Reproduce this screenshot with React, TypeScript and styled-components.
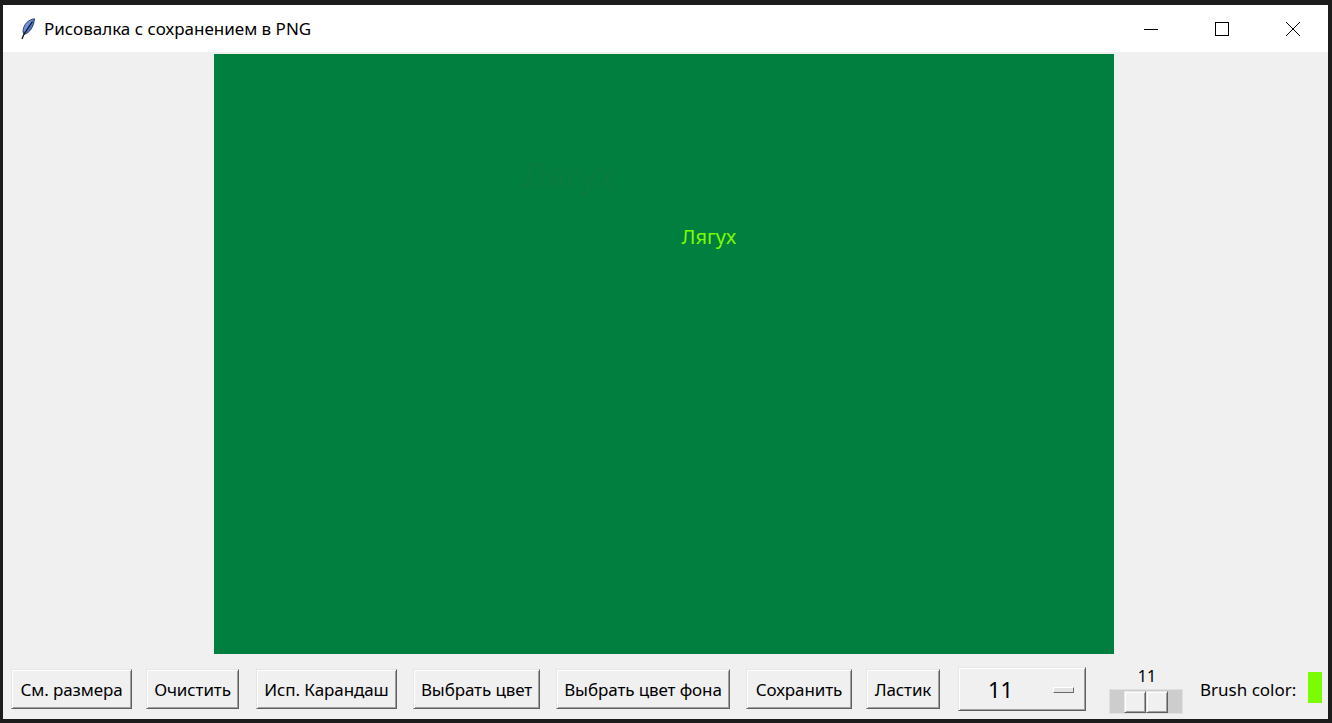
import React from 'react';
import styled, { createGlobalStyle } from 'styled-components';

const GlobalStyle = createGlobalStyle`
  html, body {
    margin: 0;
    padding: 0;
    background: #1c1c1c;
    overflow: hidden;
  }
  * {
    box-sizing: border-box;
  }
`;

interface IButtonProps {
  w: number;
}

interface ITextItemProps {
  x: number;
  y: number;
  size: number;
  color: string;
}

const Frame = styled.div`
  width: 1332px;
  height: 723px;
  padding: 5px 4px 4px 3px;
  background: #1c1c1c;
`;

const Window = styled.div`
  width: 100%;
  height: 100%;
  display: flex;
  flex-direction: column;
  font-family: 'Noto Sans', 'Open Sans', 'DejaVu Sans', sans-serif;
  color: #000;
`;

const TitleBar = styled.div`
  height: 47px;
  flex-shrink: 0;
  background: #fff;
  display: flex;
  align-items: center;
  padding-left: 17px;
`;

const TitleText = styled.div`
  font-size: 17px;
  margin-left: 8px;
  flex: 1;
`;

const Controls = styled.div`
  display: flex;
  height: 100%;
`;

const ControlBtn = styled.div`
  width: 71px;
  height: 100%;
  display: flex;
  align-items: center;
  justify-content: center;
`;

const Client = styled.div`
  flex: 1;
  background: #f0f0f0;
  display: flex;
  flex-direction: column;
  align-items: center;
`;

const Canvas = styled.div`
  width: 900px;
  height: 600px;
  margin-top: 2px;
  margin-left: -4px;
  background: #017f3e;
  position: relative;
  flex-shrink: 0;
`;

const CanvasText = styled.div<ITextItemProps>`
  position: absolute;
  left: ${({ x }) => x}px;
  top: ${({ y }) => y}px;
  font-size: ${({ size }) => size}px;
  line-height: 1;
  color: ${({ color }) => color};
  white-space: nowrap;
`;

const Toolbar = styled.div`
  align-self: stretch;
  display: flex;
  align-items: center;
  margin-top: 10px;
  padding-left: 8px;
`;

const raised = `
  border: 1px solid;
  border-color: #e6e6e6 #5f5f5f #5f5f5f #e6e6e6;
  box-shadow: inset 1px 1px #ffffff, inset -1px -1px #a0a0a0;
  background: #f0f0f0;
`;

const Button = styled.div<IButtonProps>`
  ${raised}
  width: ${({ w }) => w}px;
  height: 40px;
  display: flex;
  align-items: center;
  justify-content: center;
  font-size: 17px;
  letter-spacing: -0.1px;
  white-space: nowrap;
  flex-shrink: 0;
`;

const Gap = styled.div<{ w: number }>`
  width: ${({ w }) => w}px;
  flex-shrink: 0;
`;

const SizeMenu = styled.div`
  ${raised}
  width: 128px;
  height: 44px;
  display: flex;
  align-items: center;
  padding-left: 29px;
  font-size: 22px;
  flex-shrink: 0;
`;

const MenuIndicator = styled.div`
  width: 21px;
  height: 6px;
  margin-left: 40px;
  margin-top: 2px;
  border: 1px solid;
  border-color: #ffffff #6a6a6a #6a6a6a #ffffff;
  background: #e4e4e4;
`;

const Scale = styled.div`
  width: 74px;
  display: flex;
  flex-direction: column;
  align-items: center;
  margin-top: 5px;
  flex-shrink: 0;
`;

const ScaleValue = styled.div`
  font-size: 16px;
  line-height: 20px;
  margin: -3px 0 3px 2px;
`;

const Trough = styled.div`
  width: 74px;
  height: 25px;
  background: #cdcdcd;
  border: 1px solid #e0e0e0;
  display: flex;
  padding: 1px 0 0 14px;
`;

const Thumb = styled.div`
  ${raised}
  width: 22px;
  height: 22px;
`;

const BrushLabel = styled.div`
  font-size: 17px;
  white-space: nowrap;
`;

const Swatch = styled.div`
  width: 14px;
  height: 31px;
  margin-left: 12px;
  margin-top: -3px;
  background: #7cfc00;
`;

const Feather = () => (
  <svg width="16" height="22" viewBox="0 0 16 22">
    <defs>
      <linearGradient id="fg" x1="0" y1="0" x2="1" y2="1">
        <stop offset="0" stopColor="#a6c4f5" />
        <stop offset="0.5" stopColor="#5b85d6" />
        <stop offset="1" stopColor="#243f86" />
      </linearGradient>
    </defs>
    <path d="M14.5 0.8 C8 1.5 3 7 3 14 L4.2 16.5 C10 14.5 13.8 8.5 14.5 0.8 Z" fill="url(#fg)" stroke="#1c2f5a" strokeWidth="0.9" />
    <path d="M12.5 3.5 L3.8 16.5 L2 21" fill="none" stroke="#111" strokeWidth="1.3" />
  </svg>
);

const buttons: { label: string; w: number; gap: number }[] = [
  { label: 'См. размера', w: 121, gap: 14 },
  { label: 'Очистить', w: 93, gap: 17 },
  { label: 'Исп. Карандаш', w: 141, gap: 16 },
  { label: 'Выбрать цвет', w: 127, gap: 16 },
  { label: 'Выбрать цвет фона', w: 174, gap: 16 },
  { label: 'Сохранить', w: 106, gap: 14 },
  { label: 'Ластик', w: 74, gap: 18 },
];

const App = () => {
  return (
    <Frame>
      <GlobalStyle />
      <Window>
        <TitleBar>
          <Feather />
          <TitleText>Рисовалка с сохранением в PNG</TitleText>
          <Controls>
            <ControlBtn>
              <svg width="16" height="16" viewBox="0 0 16 16">
                <path d="M1 8.5 H15" stroke="#000" strokeWidth="1" />
              </svg>
            </ControlBtn>
            <ControlBtn>
              <svg width="16" height="16" viewBox="0 0 16 16">
                <rect x="1.5" y="1.5" width="13" height="13" fill="none" stroke="#000" strokeWidth="1" />
              </svg>
            </ControlBtn>
            <ControlBtn>
              <svg width="16" height="16" viewBox="0 0 16 16">
                <path d="M1 1 L15 15 M15 1 L1 15" stroke="#000" strokeWidth="1" />
              </svg>
            </ControlBtn>
          </Controls>
        </TitleBar>
        <Client>
          <Canvas>
            <CanvasText x={308} y={104} size={34} color="#097d3d">
              Лягух
            </CanvasText>
            <CanvasText x={468} y={173} size={20} color="#7cfc00">
              Лягух
            </CanvasText>
          </Canvas>
          <Toolbar>
            {buttons.map((b) => (
              <React.Fragment key={b.label}>
                <Button w={b.w}>{b.label}</Button>
                <Gap w={b.gap} />
              </React.Fragment>
            ))}
            <SizeMenu>
              11
              <MenuIndicator />
            </SizeMenu>
            <Gap w={23} />
            <Scale>
              <ScaleValue>11</ScaleValue>
              <Trough>
                <Thumb />
                <Thumb />
              </Trough>
            </Scale>
            <Gap w={17} />
            <BrushLabel>Brush color:</BrushLabel>
            <Swatch />
          </Toolbar>
        </Client>
      </Window>
    </Frame>
  );
};

export default App;
